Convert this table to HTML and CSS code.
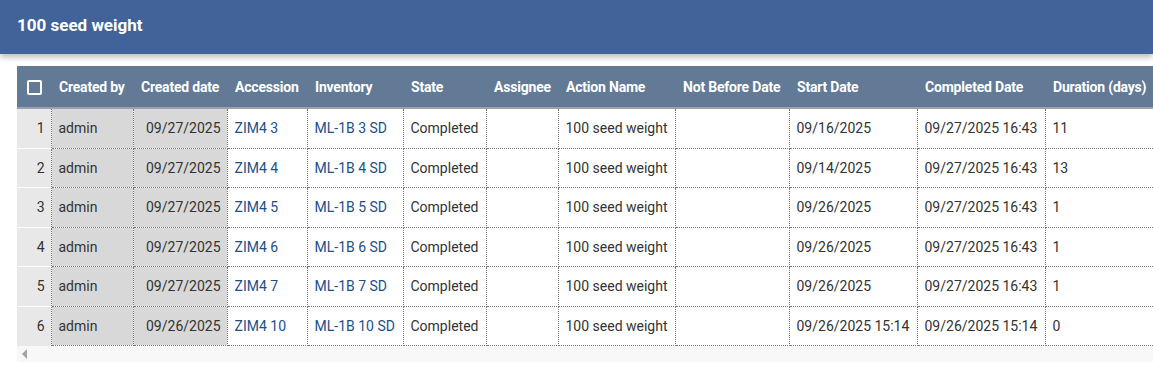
FILE: index.html
```html
<!DOCTYPE html>
<html>
<head>
<meta charset="utf-8">
<link rel="stylesheet" href="styles.css">
</head>
<body>
<header class="topbar"><h1 class="title">100 seed weight</h1></header>
<main class="content">
  <div class="grid-wrap">
    <table class="grid">
      <colgroup>
        <col class="c-num"><col class="c-by"><col class="c-cdate"><col class="c-acc"><col class="c-inv"><col class="c-state"><col class="c-asg"><col class="c-act"><col class="c-nbd"><col class="c-sd"><col class="c-cd"><col class="c-dur">
      </colgroup>
      <thead>
        <tr>
          <th class="th-check"><span class="checkbox"></span></th>
          <th>Created by</th><th>Created date</th><th>Accession</th><th>Inventory</th><th>State</th><th>Assignee</th><th>Action Name</th><th>Not Before Date</th><th>Start Date</th><th>Completed Date</th><th>Duration (days)</th>
        </tr>
      </thead>
      <tbody>
        <tr><td class="num">1</td><td class="ro">admin</td><td class="ro right">09/27/2025</td><td class="link">ZIM4 3</td><td class="link">ML-1B 3 SD</td><td>Completed</td><td></td><td>100 seed weight</td><td></td><td>09/16/2025</td><td>09/27/2025 16:43</td><td>11</td></tr>
        <tr><td class="num">2</td><td class="ro">admin</td><td class="ro right">09/27/2025</td><td class="link">ZIM4 4</td><td class="link">ML-1B 4 SD</td><td>Completed</td><td></td><td>100 seed weight</td><td></td><td>09/14/2025</td><td>09/27/2025 16:43</td><td>13</td></tr>
        <tr><td class="num">3</td><td class="ro">admin</td><td class="ro right">09/27/2025</td><td class="link">ZIM4 5</td><td class="link">ML-1B 5 SD</td><td>Completed</td><td></td><td>100 seed weight</td><td></td><td>09/26/2025</td><td>09/27/2025 16:43</td><td>1</td></tr>
        <tr><td class="num">4</td><td class="ro">admin</td><td class="ro right">09/27/2025</td><td class="link">ZIM4 6</td><td class="link">ML-1B 6 SD</td><td>Completed</td><td></td><td>100 seed weight</td><td></td><td>09/26/2025</td><td>09/27/2025 16:43</td><td>1</td></tr>
        <tr><td class="num">5</td><td class="ro">admin</td><td class="ro right">09/27/2025</td><td class="link">ZIM4 7</td><td class="link">ML-1B 7 SD</td><td>Completed</td><td></td><td>100 seed weight</td><td></td><td>09/26/2025</td><td>09/27/2025 16:43</td><td>1</td></tr>
        <tr><td class="num">6</td><td class="ro">admin</td><td class="ro right">09/26/2025</td><td class="link">ZIM4 10</td><td class="link">ML-1B 10 SD</td><td>Completed</td><td></td><td>100 seed weight</td><td></td><td>09/26/2025 15:14</td><td>09/26/2025 15:14</td><td>0</td></tr>
      </tbody>
    </table>
  </div>
  <div class="hscroll"><span class="arrow-left"></span></div>
</main>
</body>
</html>
```
FILE: styles.css
```css
html, body {
  margin: 0;
  padding: 0;
  background: #ffffff;
  font-family: Roboto, "Liberation Sans", sans-serif;
  overflow: hidden;
}
.topbar {
  height: 54px;
  background: #41639a;
  box-shadow: 0 3px 6px rgba(0, 0, 0, 0.28);
  display: flex;
  align-items: center;
  padding: 0 17px 4px;
  box-sizing: border-box;
  position: relative;
  z-index: 1;
}
.title {
  margin: 0;
  color: #ffffff;
  font-size: 17px;
  font-weight: 700;
}
.content {
  padding: 12px 0 0 17px;
}
.grid-wrap {
  overflow: hidden;
}
.grid {
  border-collapse: collapse;
  table-layout: fixed;
  width: 1150px;
  font-size: 14px;
  color: #333333;
}
.c-num { width: 34px; }
.c-by { width: 82px; }
.c-cdate { width: 94px; }
.c-acc { width: 80px; }
.c-inv { width: 96px; }
.c-state { width: 83px; }
.c-asg { width: 72px; }
.c-act { width: 117px; }
.c-nbd { width: 114px; }
.c-sd { width: 128px; }
.c-cd { width: 128px; }
.c-dur { width: 122px; }
.grid thead th {
  background: #627a96;
  color: #ffffff;
  font-size: 14px;
  font-weight: 700;
  letter-spacing: -0.2px;
  text-align: left;
  height: 41px;
  padding: 0 0 0 8px;
  border-bottom: 2px solid #9aa3ad;
  white-space: nowrap;
  overflow: hidden;
}
.grid thead th.th-check {
  padding: 0;
  text-align: center;
}
.checkbox {
  display: inline-block;
  width: 11px;
  height: 11px;
  border: 2px solid #ffffff;
  border-radius: 2px;
  vertical-align: middle;
  margin-left: 1px;
}
.grid tbody td {
  height: 38.5px;
  padding: 0 6px 0 7px;
  border: 1px dotted #7a7a7a;
  white-space: nowrap;
  overflow: hidden;
}
.grid tbody td.num {
  background: #e8e8e8;
  text-align: right;
  padding: 0 6px 0 0;
  border-left: none;
  border-top: 1px dashed #ffffff;
  border-bottom: 1px dashed #ffffff;
}
.grid tbody tr:last-child td.num {
  border-bottom: none;
}
.grid tbody tr:first-child td {
  border-top: none;
}
.grid tbody td.ro {
  background: #d8d8d8;
}
.grid tbody td.right {
  text-align: right;
}
.grid tbody td.link {
  color: #1d4f87;
}
.grid tbody td:last-child {
  border-right: none;
}
.hscroll {
  height: 16px;
  background: #f8f8f8;
  display: flex;
  align-items: center;
  padding-left: 5px;
}
.arrow-left {
  width: 0;
  height: 0;
  border-top: 5px solid transparent;
  border-bottom: 5px solid transparent;
  border-right: 5px solid #a3a3a3;
}
```
